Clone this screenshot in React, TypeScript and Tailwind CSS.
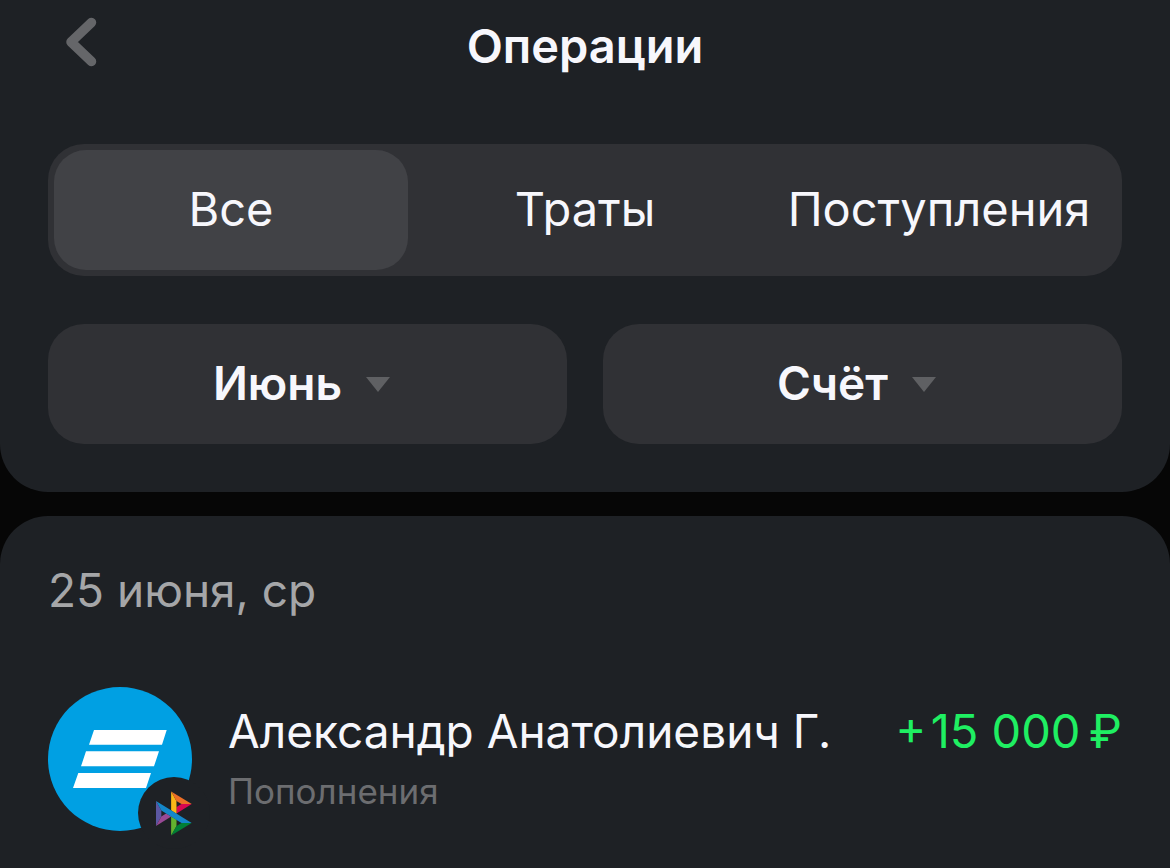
import { useState } from 'react';
import clsx from 'clsx';

const tabs = ['Все', 'Траты', 'Поступления'];

const months = ['Июнь', 'Май', 'Апрель'];
const accounts = ['Счёт', 'Карта'];

const groups = [
  {
    date: '25 июня, ср',
    items: [{ name: 'Александр Анатолиевич Г.', category: 'Пополнения', amount: '+\u200a15 000\u2009₽' }],
  },
];

function Filter({ id, label, options }: { id: string; label: string; options: string[] }) {
  return (
    <label htmlFor={id} className="flex h-30 flex-1 cursor-pointer items-center justify-center gap-6 rounded-[36px] bg-[#303135] pr-3">
      <select
        id={id}
        aria-label={label}
        className="field-sizing-content cursor-pointer appearance-none bg-transparent pb-0.5 text-[46px] leading-14 font-semibold text-[#f7f7fc] outline-none"
      >
        {options.map((o) => (
          <option key={o}>{o}</option>
        ))}
      </select>
      <svg width="24" height="15" viewBox="0 0 24 15" aria-hidden="true">
        <path d="M0 0h24L12 15z" fill="#5f6063" />
      </svg>
    </label>
  );
}

function BankLogo() {
  return (
    <svg viewBox="0 0 144 144" className="size-36" aria-hidden="true">
      <circle cx="72" cy="72" r="72" fill="#00a0e3" />
      <path
        d="M46 43h72.7L114 57.7H41zM38 64.3h73l-5 15H33zM30.3 86H103l-5 15H25z"
        fill="#fff"
      />
    </svg>
  );
}

function SbpLogo() {
  return (
    <svg viewBox="0 0 98 120" className="h-[45px] w-9" aria-hidden="true">
      <path d="M0 26.1l14.5 26v15.8L0 93.9z" fill="#5b57a2" />
      <path d="M55.8 42.6l13.6-8.3h27.9L55.8 59.7z" fill="#d90751" />
      <path d="M55.7 26l.1 34.4-14.6-9V0z" fill="#fab718" />
      <path d="M97.3 34.3H69.4L55.7 26 41.2 0z" fill="#ed6f26" />
      <path d="M55.8 94V77.3l-14.6-8.8V120z" fill="#63b22f" />
      <path d="M41.2 120L55.8 94l13.6-8.3h27.8z" fill="#017f36" />
      <path d="M0 93.9l41.4-25.4L27.5 60l-13 7.9z" fill="#984995" />
      <path d="M69.4 85.7L14.5 52.1 0 26.1l97.2 59.6z" fill="#1487c9" />
    </svg>
  );
}

export default function App() {
  const [active, setActive] = useState('Все');

  return (
    <div className="flex min-h-screen flex-col gap-6 bg-[#060606] font-['Inter',sans-serif] text-[#f7f7fc]">
      {/* Header + filters */}
      <header className="rounded-b-[48px] bg-[#1e2125] px-12 pb-12">
        <div className="grid h-36 grid-cols-[72px_1fr_72px] items-start pt-3">
          <button type="button" aria-label="Назад" className="flex h-15 items-center pl-4">
            <svg width="34" height="52" viewBox="0 0 34 52" fill="none" aria-hidden="true">
              <path d="M27.5 6.5L7 26l20.5 19.5" stroke="#656669" strokeWidth="9.5" strokeLinecap="round" strokeLinejoin="round" />
            </svg>
          </button>
          <h1 className="pt-1.5 text-center text-[47px] leading-14 font-semibold">Операции</h1>
        </div>

        <div role="tablist" className="grid grid-cols-3 rounded-[36px] bg-[#303135] p-1.5">
          {tabs.map((t) => (
            <button
              key={t}
              type="button"
              role="tab"
              aria-selected={active === t}
              onClick={() => setActive(t)}
              className={clsx('h-30 rounded-[32px] pb-0.5 text-[47px] leading-14', active === t && 'bg-[#414246]')}
            >
              {t}
            </button>
          ))}
        </div>

        <div className="mt-12 flex gap-9">
          <Filter id="month" label="Месяц" options={months} />
          <Filter id="account" label="Счёт" options={accounts} />
        </div>
      </header>

      {/* Operations */}
      <main className="flex-1 rounded-t-[48px] bg-[#1e2125] px-12 pt-[46px]">
        {groups.map((g) => (
          <section key={g.date}>
            <h2 className="text-[46px] leading-14 text-[#a5a6a8]">{g.date}</h2>
            <ul className="mt-[69px]">
              {g.items.map((item) => (
                <li key={item.name} className="flex items-center gap-9">
                  <div className="relative shrink-0">
                    <BankLogo />
                    <div className="absolute -right-[18px] -bottom-[18px] flex size-18 items-center justify-center rounded-full bg-[#1e2125]">
                      <SbpLogo />
                    </div>
                  </div>
                  <div className="min-w-0 flex-1">
                    <div className="flex items-baseline justify-between leading-14 whitespace-nowrap">
                      <span className="text-[46px]">{item.name}</span>
                      <span className="text-[47px] text-[#1fef62]">{item.amount}</span>
                    </div>
                    <div className="mt-2 text-[35px] leading-12 text-[#6c6d70]">{item.category}</div>
                  </div>
                </li>
              ))}
            </ul>
          </section>
        ))}
      </main>
    </div>
  );
}
